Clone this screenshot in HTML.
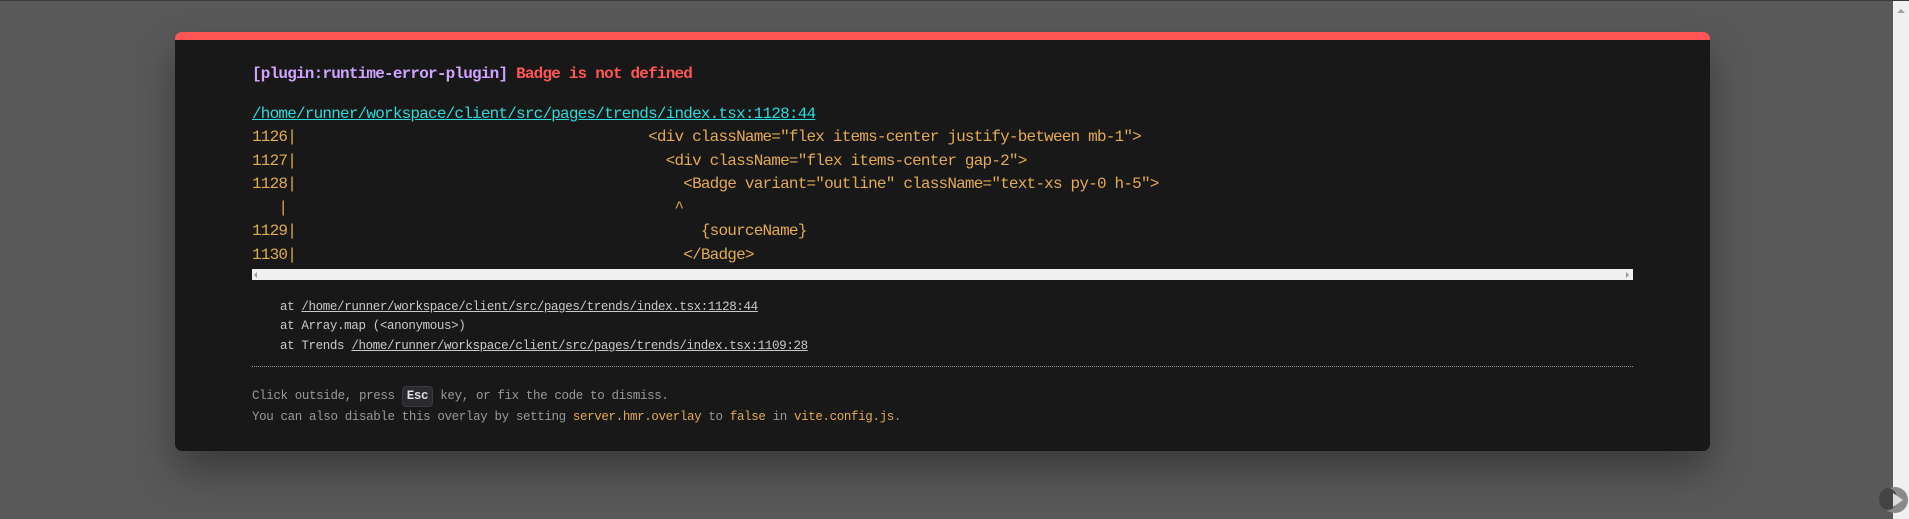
<!DOCTYPE html>
<html><head><meta charset="utf-8"><style>
html,body{margin:0;padding:0;width:1909px;height:519px;overflow:hidden;background:#595959;}
body{position:relative;border-top:1px solid #3a3a3a;box-sizing:border-box;}
.card{position:absolute;left:175px;top:31px;width:1535px;height:419px;background:#181818;border-radius:7px;border-top:8px solid #ff5555;box-sizing:border-box;box-shadow:0 20px 40px rgba(0,0,0,0.35);}
.t{position:absolute;left:252px;white-space:pre;font-family:"Liberation Mono",monospace;}
.big{font-size:16px;letter-spacing:-0.8px;line-height:20px;}
.sm{font-size:12.5px;letter-spacing:-0.37px;line-height:16px;color:#c9c9c9;}
.y{color:#e2aa53}
.sb{position:absolute;left:252px;top:268px;width:1381px;height:11px;background:#f0f0f0;}
.dot{position:absolute;left:252px;top:365px;width:1381px;border-top:1px dotted #999;}
.kbd{display:inline-block;background:#2a2a2e;border:1px solid #3a3a40;border-radius:4px;padding:0 4px;line-height:19px;color:#ddd;font-weight:bold;}
.vs{position:absolute;left:1893px;top:0;width:16px;height:519px;background:#f0f0f0;}
</style></head><body>
<div class="card"></div>
<div class="t big" style="top:63px;font-weight:bold"><span style="color:#cfa4ff">[plugin:runtime-error-plugin]</span> <span style="color:#ff5555">Badge is not defined</span></div>
<div class="t big" style="top:103px;color:#2dd9da;text-decoration:underline">/home/runner/workspace/client/src/pages/trends/index.tsx:1128:44</div>
<div class="t big y" style="top:126px">1126|                                        &lt;div className="flex items-center justify-between mb-1"&gt;</div>
<div class="t big y" style="top:150px">1127|                                          &lt;div className="flex items-center gap-2"&gt;</div>
<div class="t big y" style="top:173px">1128|                                            &lt;Badge variant="outline" className="text-xs py-0 h-5"&gt;</div>
<div class="t big y" style="top:197px">   |                                            ^</div>
<div class="t big y" style="top:220px">1129|                                              {sourceName}</div>
<div class="t big y" style="top:244px">1130|                                            &lt;/Badge&gt;</div>
<div class="sb"><span style="position:absolute;left:2px;top:3px;border:3px solid transparent;border-right:3px solid #999;border-left:0"></span><span style="position:absolute;right:4px;top:3px;border:3px solid transparent;border-left:3px solid #999;border-right:0"></span></div>
<div class="t sm" style="top:298px;left:280px">at <u>/home/runner/workspace/client/src/pages/trends/index.tsx:1128:44</u></div>
<div class="t sm" style="top:317px;left:280px">at Array.map (&lt;anonymous&gt;)</div>
<div class="t sm" style="top:337px;left:280px">at Trends <u>/home/runner/workspace/client/src/pages/trends/index.tsx:1109:28</u></div>
<div class="dot"></div>
<div class="t sm" style="top:385px;color:#999">Click outside, press <span class="kbd">Esc</span> key, or fix the code to dismiss.</div>
<div class="t sm" style="top:408px;color:#999">You can also disable this overlay by setting <span class="y">server.hmr.overlay</span> to <span class="y">false</span> in <span class="y">vite.config.js</span>.</div>
<div class="vs"><span style="position:absolute;left:4px;top:8px;border:4px solid transparent;border-bottom:4px solid #a0a0a0;border-top:0"></span></div>
<div style="position:absolute;left:1882px;top:486px;width:26px;height:26px;border-radius:50%;background:#8a8a8a;"></div>
<div style="position:absolute;left:1879px;top:487px;width:18px;height:22px;border-radius:50%;background:#444;"></div>
<div style="position:absolute;left:1893px;top:492px;border:7px solid transparent;border-left:10px solid #ddd;border-right:0"></div>
</body></html>
